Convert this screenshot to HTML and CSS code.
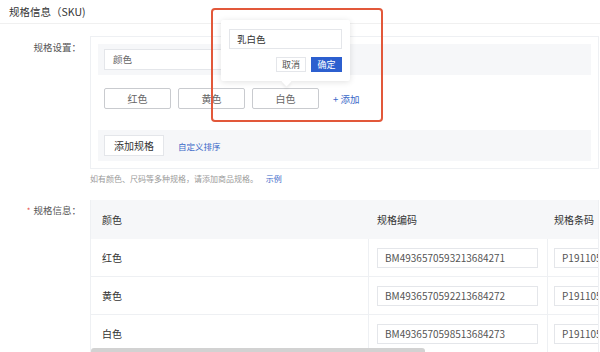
FILE: index.html
```html
<!DOCTYPE html>
<html lang="zh">
<head>
<meta charset="utf-8">
<link rel="stylesheet" href="styles.css">
</head>
<body>
<div class="page">
  <div class="title">规格信息（SKU)</div>

  <div class="form-row row-setting">
    <div class="label">规格设置：</div>
    <div class="content">
      <div class="spec-panel">
        <div class="spec-name-bar">
          <div class="input spec-name">颜色</div>
        </div>
        <div class="tags">
          <span class="tag">红色</span>
          <span class="tag">黄色</span>
          <span class="tag">白色</span>
          <span class="add-link">+ 添加</span>
        </div>
        <div class="add-bar">
          <span class="btn">添加规格</span>
          <span class="link small">自定义排序</span>
        </div>
      </div>
      <div class="hint">如有颜色、尺码等多种规格，请添加商品规格。 <span class="link">示例</span></div>
    </div>
  </div>

  <div class="form-row row-table">
    <div class="label"><span class="star">*</span>规格信息：</div>
    <div class="table-wrap">
      <div class="table-inner">
        <div class="trow thead">
          <div class="cell c1">颜色</div>
          <div class="cell c2">规格编码</div>
          <div class="cell c3">规格条码</div>
        </div>
        <div class="trow">
          <div class="cell c1">红色</div>
          <div class="cell c2 bl"><div class="input cin">BM4936570593213684271</div></div>
          <div class="cell c3 bl"><div class="input cin">P191105-00001</div></div>
        </div>
        <div class="trow">
          <div class="cell c1">黄色</div>
          <div class="cell c2 bl"><div class="input cin">BM4936570592213684272</div></div>
          <div class="cell c3 bl"><div class="input cin">P191105700002</div></div>
        </div>
        <div class="trow">
          <div class="cell c1">白色</div>
          <div class="cell c2 bl"><div class="input cin">BM4936570598513684273</div></div>
          <div class="cell c3 bl"><div class="input cin">P191105-00003</div></div>
        </div>
      </div>
    </div>
  </div>

  <div class="scrollbar"></div>

  <div class="popover">
    <div class="input pop-input">乳白色</div>
    <div class="pop-actions">
      <span class="pbtn">取消</span>
      <span class="pbtn primary">确定</span>
    </div>
  </div>
  <div class="highlight"></div>
</div>
</body>
</html>
```
FILE: styles.css
```css
* { box-sizing: border-box; }
html, body {
  margin: 0;
  padding: 0;
  background: #fff;
  overflow: hidden;
}
body {
  font-family: "Noto Sans CJK SC", "Noto Sans", sans-serif;
  font-size: 10px;
  color: #333;
  width: 600px;
  height: 352px;
}
.page {
  position: relative;
  width: 600px;
  height: 352px;
  overflow: hidden;
}
.title {
  height: 24px;
  line-height: 23px;
  padding-left: 9px;
  font-size: 10.5px;
  color: #333;
  border-bottom: 1px solid #f0f0f0;
}
.form-row {
  display: flex;
  align-items: flex-start;
}
.row-setting { margin-top: 12px; }
.row-table { margin-top: 15px; }
.label {
  width: 90px;
  flex: none;
  text-align: right;
  padding-right: 9px;
  color: #555;
  font-size: 9.5px;
  line-height: 12px;
  padding-top: 5px;
  white-space: nowrap;
}
.row-table .label { padding-top: 4px; }
.star {
  color: #e8504a;
  margin-right: 3px;
  font-size: 8px;
}
.content {
  flex: none;
  width: 509px;
}
.spec-panel {
  border: 1px solid #eef0f3;
  padding: 7px;
  width: 509px;
}
.spec-name-bar {
  background: #f6f7f9;
  height: 31px;
  padding: 5px 6px;
}
.input {
  background: #fff;
  border: 1px solid #e4e6ea;
  height: 21px;
  line-height: 19px;
  padding-left: 8px;
  color: #666;
  font-size: 9.5px;
  white-space: nowrap;
  overflow: hidden;
}
.spec-name { width: 200px; }
.tags {
  display: flex;
  align-items: center;
  gap: 7px;
  margin-top: 13px;
  padding-left: 6px;
  height: 21px;
}
.tag {
  flex: none;
  width: 67px;
  height: 21px;
  border: 1px solid #c9cbcf;
  border-radius: 2px;
  text-align: center;
  line-height: 19px;
  color: #666;
  font-size: 10px;
}
.add-link {
  margin-left: 7px;
  color: #3a68c8;
  font-size: 9.5px;
}
.add-bar {
  margin-top: 21px;
  background: #f6f7f9;
  height: 31px;
  padding: 5px 6px;
  display: flex;
  align-items: center;
  gap: 14px;
}
.btn {
  flex: none;
  width: 60px;
  height: 21px;
  background: #fff;
  border: 1px solid #e4e6ea;
  text-align: center;
  line-height: 19px;
  color: #333;
  font-size: 10px;
}
.link { color: #3a68c8; }
.small { font-size: 8.5px; }
.hint {
  margin-top: 4px;
  line-height: 12px;
  font-size: 8px;
  color: #9a9a9a;
  white-space: nowrap;
}
.hint .link { margin-left: 6px; }
.table-wrap {
  flex: none;
  width: 509px;
  overflow: hidden;
  border-left: 1px solid #eef0f3;
  border-right: 1px solid #eef0f3;
}
.table-inner {
  width: 640px;
}
.trow {
  display: flex;
  height: 38px;
  border-bottom: 1px solid #eef0f3;
}
.thead {
  height: 39px;
  background: #f6f7f9;
  border-bottom: none;
}
.cell {
  flex: none;
  display: flex;
  align-items: center;
  padding-left: 11px;
  color: #333;
  font-size: 10px;
}
.c1 { width: 277px; }
.c2 { width: 179px; padding-left: 8px; }
.c3 { width: 180px; padding-left: 6px; }
.thead .c2 { padding-left: 9px; }
.thead .c3 { padding-left: 7px; }
.bl { border-left: 1px solid #eef0f3; }
.c2 .cin { width: 161px; }
.c3 .cin { width: 161px; }
.cin {
  height: 20px;
  line-height: 18px;
  padding-left: 7px;
  font-size: 10px;
  color: #555;
}
.scrollbar {
  position: absolute;
  left: 91px;
  top: 348px;
  width: 334px;
  height: 7px;
  border-radius: 3px;
  background: #d2d2d2;
}
.popover {
  position: absolute;
  left: 221px;
  top: 20px;
  width: 129px;
  height: 61px;
  background: #fff;
  padding: 9px 8px;
  box-shadow: 0 1px 6px rgba(0, 0, 0, 0.12);
  border-radius: 2px;
}
.popover::after {
  content: "";
  position: absolute;
  left: 62px;
  bottom: -4px;
  width: 7px;
  height: 7px;
  background: #fff;
  transform: rotate(45deg);
  box-shadow: 2px 2px 3px rgba(0, 0, 0, 0.06);
}
.pop-input {
  height: 20px;
  line-height: 18px;
  padding-left: 7px;
  color: #333;
  font-size: 9.5px;
}
.pop-actions {
  margin-top: 8px;
  display: flex;
  justify-content: flex-end;
  gap: 5px;
}
.pbtn {
  flex: none;
  width: 30px;
  height: 15px;
  line-height: 13px;
  border: 1px solid #e4e6ea;
  text-align: center;
  font-size: 9px;
  color: #555;
  background: #fff;
}
.pbtn.primary {
  width: 31px;
  background: #2c5fcf;
  border-color: #2c5fcf;
  color: #fff;
}
.highlight {
  position: absolute;
  left: 211px;
  top: 8px;
  width: 172px;
  height: 114px;
  border: 2px solid #e2583a;
  border-radius: 4px;
}
```
